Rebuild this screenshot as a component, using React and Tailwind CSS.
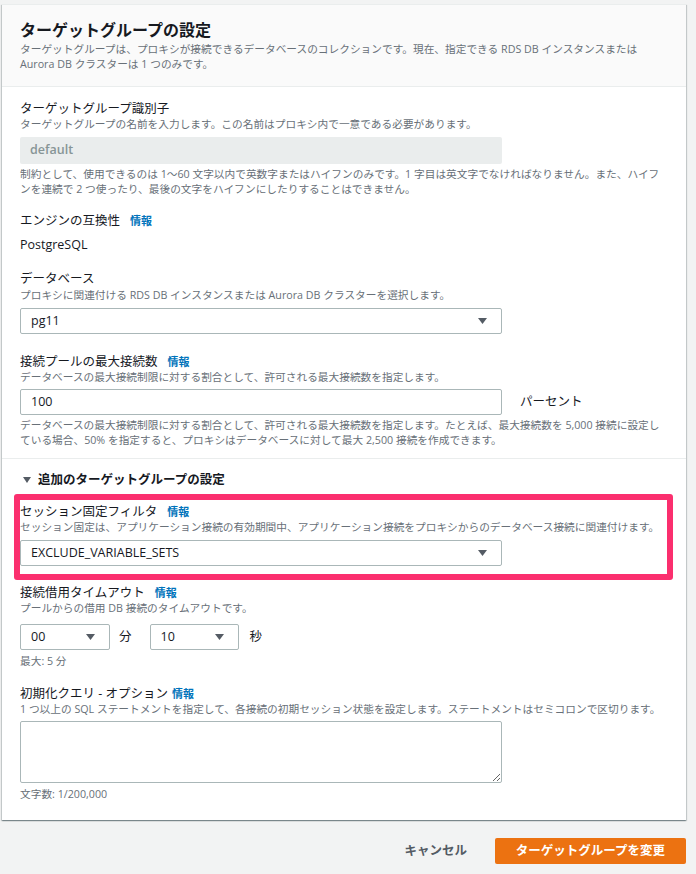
import React from 'react'

const font = { fontFamily: '"Open Sans", "Noto Sans CJK JP", sans-serif' }

function Caret({ className = '' }) {
	return (
		<svg width="9" height="6" viewBox="0 0 9 6" className={className}>
			<polygon points="0,0 9,0 4.5,6" fill="#545b64" />
		</svg>
	)
}

function Label({ children, info, infoGap = 'ml-[10px]', className = '' }) {
	return (
		<div className={`text-[12.5px] leading-[16px] text-[#16191f] ${className}`}>
			{children}
			{info && <span className={`${infoGap} text-[11px] font-bold leading-none text-[#0073bb]`}>情報</span>}
		</div>
	)
}

function Desc({ children, className = '' }) {
	return <div className={`text-[10.7px] leading-[15px] text-[#687078] ${className}`}>{children}</div>
}

function Select({ value, className = '' }) {
	return (
		<div className={`flex h-[26px] items-center justify-between rounded-[2px] border border-[#aab7b8] bg-white pl-[10px] pr-[14px] text-[12.5px] text-[#16191f] ${className}`}>
			<span>{value}</span>
			<Caret />
		</div>
	)
}

export default function App() {
	return (
		<div className="min-h-[874px] bg-[#f2f3f3] pl-[2px] pt-[4px]" style={font}>
			<div className="w-[684px] border-t border-[#eaeded] bg-white shadow-[0_1px_1px_0_rgba(0,28,36,0.3),1px_1px_1px_0_rgba(0,28,36,0.15),-1px_1px_1px_0_rgba(0,28,36,0.15)]">
				<div className="border-b border-[#eaeded] bg-[#fafafa] pb-[14px] pl-[18px] pr-[19px] pt-[14px]">
					<h2 className="text-[16px] font-bold leading-[22px] text-[#16191f]">ターゲットグループの設定</h2>
					<Desc className="mt-[1px]">
						ターゲットグループは、プロキシが接続できるデータベースのコレクションです。現在、指定できる RDS DB インスタンスまたは<br />
						Aurora DB クラスターは 1 つのみです。
					</Desc>
				</div>

				<div className="border-b border-[#eaeded] pb-[10px] pl-[18px] pr-[19px] pt-[14px]">
					<Label>ターゲットグループ識別子</Label>
					<Desc>ターゲットグループの名前を入力します。この名前はプロキシ内で一意である必要があります。</Desc>
					<div className="mt-[5px] flex h-[27px] w-[482px] items-center rounded-[2px] bg-[#eaeded] pl-[10px] text-[12.5px] font-semibold text-[#879596]">default</div>
					<Desc className="mt-[3px]">
						制約として、使用できるのは 1〜60 文字以内で英数字またはハイフンのみです。1 字目は英文字でなければなりません。また、ハイフ<br />
						ンを連続で 2 つ使ったり、最後の文字をハイフンにしたりすることはできません。
					</Desc>

					<Label info className="mt-[16px]">エンジンの互換性</Label>
					<div className="mt-[8px] text-[12.5px] leading-[16px] text-[#16191f]">PostgreSQL</div>

					<Label className="mt-[18px]">データベース</Label>
					<Desc className="mt-[1px]">プロキシに関連付ける RDS DB インスタンスまたは Aurora DB クラスターを選択します。</Desc>
					<Select value="pg11" className="mt-[5px] w-[482px]" />

					<Label info className="mt-[20px]">接続プールの最大接続数</Label>
					<Desc>データベースの最大接続制限に対する割合として、許可される最大接続数を指定します。</Desc>
					<div className="mt-[4px] flex items-center">
						<div className="flex h-[26px] w-[482px] items-center rounded-[2px] border border-[#aab7b8] pl-[10px] text-[12.5px] text-[#16191f]">100</div>
						<span className="ml-[18px] text-[12.5px] text-[#16191f]">パーセント</span>
					</div>
					<Desc className="mt-[3px]">
						データベースの最大接続制限に対する割合として、許可される最大接続数を指定します。たとえば、最大接続数を 5,000 接続に設定し<br />
						ている場合、50% を指定すると、プロキシはデータベースに対して最大 2,500 接続を作成できます。
					</Desc>
				</div>

				<div className="pb-[18px] pl-[18px] pr-[19px] pt-[13px]">
					<div className="flex items-center text-[12.5px] font-bold leading-[16px] text-[#16191f]">
						<svg width="8" height="6" viewBox="0 0 8 6" className="ml-[3px] mr-[7px]">
							<polygon points="0,0 8,0 4,6" fill="#545b64" />
						</svg>
						追加のターゲットグループの設定
					</div>

					<div className="-mx-[6px] mt-[6px] rounded-[3px] border-[6px] border-[#fb2f6e] pb-[8px] pl-[6px] pt-[4px]">
						<Label info className="-ml-[6px] leading-[14px]">セッション固定フィルタ</Label>
						<Desc className="-ml-[6px]">セッション固定は、アプリケーション接続の有効期間中、アプリケーション接続をプロキシからのデータベース接続に関連付けます。</Desc>
						<Select value="EXCLUDE_VARIABLE_SETS" className="-ml-[6px] mt-[5px] w-[482px]" />
					</div>

					<Label info className="mt-[5px]">接続借用タイムアウト</Label>
					<Desc>プールからの借用 DB 接続のタイムアウトです。</Desc>
					<div className="mt-[8px] flex items-center text-[12.5px] text-[#16191f]">
						<Select value="00" className="w-[90px]" />
						<span className="ml-[9px]">分</span>
						<Select value="10" className="ml-[18px] w-[89px]" />
						<span className="ml-[11px]">秒</span>
					</div>
					<Desc className="mt-[4px]">最大: 5 分</Desc>

					<Label info infoGap="ml-[4px]" className="mt-[17px]">初期化クエリ - オプション</Label>
					<Desc>1 つ以上の SQL ステートメントを指定して、各接続の初期セッション状態を設定します。ステートメントはセミコロンで区切ります。</Desc>
					<textarea className="mt-[4px] block h-[62px] w-[482px] rounded-[2px] border border-[#aab7b8] text-[12.5px]" />
					<Desc className="mt-[4px]">文字数: 1/200,000</Desc>
				</div>
			</div>

			<div className="mt-[18px] flex w-[684px] items-center justify-end">
				<button className="mr-[28px] text-[12.5px] font-bold text-[#545b64]">キャンセル</button>
				<button className="flex h-[26px] w-[191px] items-center justify-center rounded-[2px] bg-[#ec7211] text-[12.5px] font-bold text-white">ターゲットグループを変更</button>
			</div>
		</div>
	)
}
